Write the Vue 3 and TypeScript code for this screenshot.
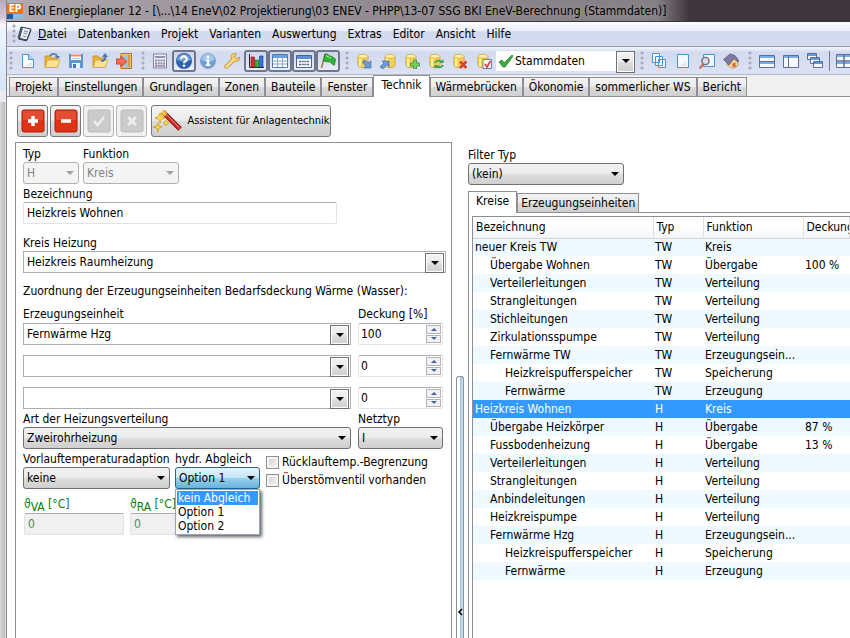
<script setup lang="ts">
import { ref } from 'vue'

interface Tool { icon: string; label: string; pressed?: boolean }
interface Circuit { name: string; level: number; typ: string; fn: string; share?: string }

const dbBase = '<path d="M2 3.5v9c0 1.4 2.2 2 5 2s5-.6 5-2v-9z" fill="#f3cf58" stroke="#c99a2c" stroke-width=".8"/><path d="M4 5v8.500" stroke="#fff3b0" stroke-width="2"/><ellipse cx="7" cy="3.300" rx="5" ry="2" fill="#fff0a2" stroke="#d3a93a" stroke-width=".8"/>'
const folder = '<path d="M1 3h5l1 2h6v9H1z" fill="#e9b53c" stroke="#c08a20" stroke-width=".8"/><path d="M3.500 7H16l-2.500 7.500H1z" fill="#ffe391" stroke="#d3a236" stroke-width=".8"/>'

const icons: Record<string, string> = {
  page: '<path d="M2.500 1.500h6l5 5v8h-11z" fill="#fff" stroke="#4a8fd0"/><path d="M8.500 1.500v5h5" fill="#bcd9f3" stroke="#4a8fd0"/><path d="M4 13h8V9z" fill="#d9ebfb"/>',
  open: folder + '<path d="M6 3c2-3 6-2.500 7 0" fill="none" stroke="#5a7ba8" stroke-width="1.800"/><path d="M10.500 3H16l-2 3z" fill="#5a7ba8"/>',
  save: '<path d="M1 1h14v14H1z" fill="#5f95cf"/><path d="M3 1h10v6H3z" fill="#fff"/><path d="M3 2.500h10" stroke="#ef8661" stroke-width="2"/><path d="M4 5.500h8" stroke="#b9c9da"/><path d="M4 10h8v5H4z" fill="#eaf2fa"/><path d="M5 11h3v4H5z" fill="#4578b4"/>',
  openUp: folder + '<path d="M9 8c4 0 4.500-2 4.500-5" fill="none" stroke="#4a77b2" stroke-width="2"/><path d="M10 4l3-4 3 4z" fill="#4a77b2"/>',
  exit: '<path d="M5 .5h10.500v15H5z" fill="#f2c46a" stroke="#a9762b"/><path d="M7 2h7v13H7z" fill="#9cc6e8"/><path d="M12 2h2v13l-2-2z" fill="#d99743"/><path d="M0 6h5V3l6 5.500-6 5V11H0z" fill="#f57059" stroke="#be3527" stroke-width=".8"/>',
  calc: '<path d="M1.500 1h13v14h-13z" fill="#f0eff5" stroke="#8583a0"/><path d="M3 3h10v2H3z" fill="#9592ad"/><path d="M3 7.500h10M3 10.500h10M3 13h10" stroke="#8d8aa6" stroke-width="2" stroke-dasharray="2 .7"/>',
  help: '<circle cx="8" cy="8" r="8" fill="#2b62ab"/><path d="M1 7a7 6 0 0 1 14 0q-7 3-14 0" fill="#6f9dd6"/><path d="M5 6.300c0-4 6-3.600 5.800 0-.2 2-2.800 1.800-2.800 4" fill="none" stroke="#fff" stroke-width="2.200"/><circle cx="8" cy="12.800" r="1.300" fill="#fff"/>',
  info: '<circle cx="8" cy="8" r="7.600" fill="#6f9ed6" stroke="#8ba5c8" stroke-width=".8"/><path d="M1.500 7a6.500 6 0 0 1 13 0q-6.500 3-13 0" fill="#a6c5ea"/><circle cx="8" cy="4" r="1.500" fill="#fff"/><path d="M6 6.500h3.200v5H10.500v1.500h-5v-1.500h1.300V8H6z" fill="#fff"/>',
  wrench: '<path d="M2.500 13.500L10 6.500" stroke="#c08c34" stroke-width="4.400" stroke-linecap="round"/><path d="M15.500 4l-3 2-2-2 2-3.500c-3-1-6 1-5.500 4.500 0 3.500 7 5 8.500 1z" fill="#f7cf62" stroke="#c08c34" stroke-width=".8"/><path d="M2.500 13.500L10 6.500" stroke="#fadc82" stroke-width="2.800" stroke-linecap="round"/>',
  chart: '<path d="M1.500 1v13.500H16" fill="none" stroke="#26292f"/><path d="M3 4h3.500v10H3z" fill="#e3282d" stroke="#9b1a1e" stroke-width=".7"/><path d="M7 7h3.500v7H7z" fill="#3cad42" stroke="#1d7a25" stroke-width=".7"/><path d="M11.500 3h3.500v11h-3.500z" fill="#3474d2" stroke="#1b4a9c" stroke-width=".7"/>',
  table: '<path d="M.5 1.500h15v13H.5z" fill="#fff" stroke="#507bb8"/><path d="M1 2h14v3H1z" fill="#6b9fe0"/><path d="M1 8h14M1 11h14M5.500 5v9M10.500 5v9" stroke="#86a4cc"/>',
  list: '<path d="M.5 2.500h15v12H.5z" fill="#fff" stroke="#42629e"/><path d="M1 3h14v3H1z" fill="#5b8fd8"/><path d="M3 8.500h10M3 11.500h10" stroke="#4a6189" stroke-width="1.500" stroke-dasharray="2 .7"/>',
  flag: '<path d="M5 1L1.500 15" stroke="#9c7830" stroke-width="1.400"/><path d="M5 1c3-1 4 3 6 2l4.500 3-1 6c-3 0-4-4-6-3L3.500 8z" fill="#36b03c" stroke="#167c22" stroke-width=".8"/><path d="M6 3c2 0 3 2 5 2" stroke="#8be186" fill="none" stroke-width="1.500"/>',
  dbOut: dbBase + '<path d="M7 8l2-1 3 3 3-2v7H8l2-2-3-3z" fill="#6b9bd6" stroke="#3d6ca8" stroke-width=".7"/>',
  dbIn: '<g transform="translate(3)">' + dbBase + '</g><path d="M0 14l4-4-2-2h7v6l-2-2-4 4z" fill="#6b9bd6" stroke="#3d6ca8" stroke-width=".7"/>',
  dbAdd: dbBase + '<path d="M9.500 7h3v3h3v3h-3v3h-3v-3h-3v-3h3z" fill="#7ccd61" stroke="#3b9133" stroke-width=".8"/>',
  dbSync: dbBase + '<path d="M7 10c1-3 5-3 7-1M15 12c-1 3-5 3-7 1" fill="none" stroke="#3f9c46" stroke-width="1.800"/><path d="M15.500 6v4h-4zM6.500 16v-4h4z" fill="#3f9c46"/>',
  dbDel: dbBase + '<path d="M8 8.500l6.500 6.500M14.500 8.500L8 15" stroke="#d8412c" stroke-width="2.600"/>',
  dbCheck: dbBase + '<path d="M7 6.500h8.500v9H7z" fill="#f6f9ff" stroke="#6483b4"/><path d="M9 11l2 3 3.500-6" fill="none" stroke="#e04832" stroke-width="1.800"/>',
  copies: '<g fill="#f5faff" stroke="#4b94cf"><path d="M1.500.5h7v9h-7zM4.500 3.500h7v9h-7zM7.500 6.500h7v8h-7z"/></g>',
  sheet: '<path d="M2.500 1.500h11v13h-11z" fill="#f3f9ff" stroke="#4b94cf"/><path d="M4 13h8V8z" fill="#dcecfb"/>',
  find: '<path d="M4.500 1.500h11v12h-11z" fill="#eef6ff" stroke="#4b94cf"/><path d="M4.500 11L.5 15.500" stroke="#d4604c" stroke-width="2"/><circle cx="6.500" cy="8" r="3.600" fill="#d5dae6" stroke="#71697d" stroke-width="1.400"/>',
  home: '<path d="M4 8v4l6 3.500 5-3V7L11 3z" fill="#f8d889" stroke="#b08c48" stroke-width=".7"/><path d="M.5 6.500L7 1l5 1.500L16 8l-1.500 1L11 5.500 6 12z" fill="#7f78a0" stroke="#5c5478" stroke-width=".7"/><path d="M9.500 10.500l3-1v5l-3-1z" fill="#d8603a"/>',
  tileH: '<path d="M.5 2.500h15v12H.5z" fill="#f8fbff" stroke="#5d6d99"/><path d="M1 3h14v2H1zM1 9h14v2H1z" fill="#79ade2"/><path d="M.5 8.500h15" stroke="#5d6d99"/>',
  tileV: '<path d="M.5 2.500h15v12H.5z" fill="#f8fbff" stroke="#5d6d99"/><path d="M1 3h14v2H1z" fill="#79ade2"/><path d="M5.500 3v11" stroke="#5d6d99"/>',
  cascade: '<g fill="#f8fbff" stroke="#5d6d99"><path d="M.5.5h9v6h-9zM3.500 4.500h9v6h-9zM6.500 8.500h9v6h-9z"/></g><path d="M1 1h8v2H1zM4 5h8v2H4zM7 9h8v2H7z" fill="#5f9bdc"/>',
  grid: '<path d="M.5 1.500h15v13H.5z" fill="#f8fbff" stroke="#5d6d99"/><path d="M1 2h14v2H1zM1 9h14v2H1z" fill="#79ade2"/><path d="M.5 8h15M8 2v12" stroke="#5d6d99" stroke-width="1.500"/>',
}

const groupA: Tool[] = [
  { icon: 'page', label: 'Neu' }, { icon: 'open', label: 'Öffnen' }, { icon: 'save', label: 'Speichern' },
  { icon: 'openUp', label: 'Importieren' }, { icon: 'exit', label: 'Beenden' },
]
const groupB: Tool[] = [
  { icon: 'calc', label: 'Rechner' }, { icon: 'help', label: 'Hilfe', pressed: true }, { icon: 'info', label: 'Info' },
  { icon: 'wrench', label: 'Einstellungen' }, { icon: 'chart', label: 'Diagramm', pressed: true },
  { icon: 'table', label: 'Tabelle', pressed: true }, { icon: 'list', label: 'Liste', pressed: true },
  { icon: 'flag', label: 'Markierung', pressed: true },
]
const groupC: Tool[] = [
  { icon: 'dbOut', label: 'Variante laden' }, { icon: 'dbIn', label: 'Variante sichern' }, { icon: 'dbAdd', label: 'Variante hinzufügen' },
  { icon: 'dbSync', label: 'Variante aktualisieren' }, { icon: 'dbDel', label: 'Variante löschen' }, { icon: 'dbCheck', label: 'Variante prüfen' },
]
const groupD: Tool[] = [
  { icon: 'copies', label: 'Alle Seiten' }, { icon: 'sheet', label: 'Seite' }, { icon: 'find', label: 'Vorschau' }, { icon: 'home', label: 'Gebäude' },
]
const groupE: Tool[] = [
  { icon: 'tileH', label: 'Untereinander' }, { icon: 'tileV', label: 'Nebeneinander' }, { icon: 'cascade', label: 'Überlappend' },
]

const menu = ['Datenbanken', 'Projekt', 'Varianten', 'Auswertung', 'Extras', 'Editor', 'Ansicht', 'Hilfe']
const tabs = ['Projekt', 'Einstellungen', 'Grundlagen', 'Zonen', 'Bauteile', 'Fenster', 'Technik', 'Wärmebrücken', 'Ökonomie', 'sommerlicher WS', 'Bericht']
const activeTab = ref('Technik')

const name = ref('Heizkreis Wohnen')
const sources = ref([
  { unit: 'Fernwärme Hzg', share: 100 },
  { unit: '', share: 0 },
  { unit: '', share: 0 },
])
const balance = ref('Option 1')
const balanceOpen = ref(true)
const balanceOptions = ['kein Abgleich', 'Option 1', 'Option 2']
const hovered = ref('kein Abgleich')
function pick(option: string) {
  balance.value = option
  balanceOpen.value = false
}
function step(i: number, by: number) {
  const s = sources.value[i]
  s.share = Math.min(100, Math.max(0, s.share + by))
}

const circuits: Circuit[] = [
  { name: 'neuer Kreis TW', level: 0, typ: 'TW', fn: 'Kreis' },
  { name: 'Übergabe Wohnen', level: 1, typ: 'TW', fn: 'Übergabe', share: '100 %' },
  { name: 'Verteilerleitungen', level: 1, typ: 'TW', fn: 'Verteilung' },
  { name: 'Strangleitungen', level: 1, typ: 'TW', fn: 'Verteilung' },
  { name: 'Stichleitungen', level: 1, typ: 'TW', fn: 'Verteilung' },
  { name: 'Zirkulationsspumpe', level: 1, typ: 'TW', fn: 'Verteilung' },
  { name: 'Fernwärme TW', level: 1, typ: 'TW', fn: 'Erzeugungsein...' },
  { name: 'Heizkreispufferspeicher', level: 2, typ: 'TW', fn: 'Speicherung' },
  { name: 'Fernwärme', level: 2, typ: 'TW', fn: 'Erzeugung' },
  { name: 'Heizkreis Wohnen', level: 0, typ: 'H', fn: 'Kreis' },
  { name: 'Übergabe Heizkörper', level: 1, typ: 'H', fn: 'Übergabe', share: '87 %' },
  { name: 'Fussbodenheizung', level: 1, typ: 'H', fn: 'Übergabe', share: '13 %' },
  { name: 'Verteilerleitungen', level: 1, typ: 'H', fn: 'Verteilung' },
  { name: 'Strangleitungen', level: 1, typ: 'H', fn: 'Verteilung' },
  { name: 'Anbindeleitungen', level: 1, typ: 'H', fn: 'Verteilung' },
  { name: 'Heizkreispumpe', level: 1, typ: 'H', fn: 'Verteilung' },
  { name: 'Fernwärme Hzg', level: 1, typ: 'H', fn: 'Erzeugungsein...' },
  { name: 'Heizkreispufferspeicher', level: 2, typ: 'H', fn: 'Speicherung' },
  { name: 'Fernwärme', level: 2, typ: 'H', fn: 'Erzeugung' },
]
const selected = ref(9)
</script>

<template>
  <div class="desktop">
    <aside class="behind"><div class="behind-title"></div><div class="behind-body"></div><div class="behind-scroll"></div></aside>
    <div class="window">
      <header class="titlebar">
        <span class="logo"><b>EP</b><i></i></span>
        <h1>BKI Energieplaner 12 - [\...\14 EneV\02 Projektierung\03 ENEV - PHPP\13-07 SSG BKI EneV-Berechnung (Stammdaten)]</h1>
      </header>

      <nav class="menubar">
        <span class="grip"></span>
        <svg class="book" viewBox="0 0 16 16" aria-hidden="true">
          <path d="M5 1l10 2-4 11-9-2z" fill="#e9edf4" stroke="#3d4656" />
          <path d="M5 1L2 12l2 .5L7 1.500z" fill="#4b5567" />
          <path d="M8 5l4 1M7.500 7l3.500 1M7 10l3 .6" stroke="#7e899b" />
          <path d="M2.500 13l8 1.800L15 4" fill="none" stroke="#2e3542" />
        </svg>
        <a href="#"><u>D</u>atei</a>
        <a v-for="m in menu" :key="m" href="#">{{ m }}</a>
      </nav>

      <div class="toolbar" role="toolbar" aria-label="Werkzeuge">
        <span class="grip first"></span>
        <button v-for="t in groupA" :key="t.icon" type="button" class="tool" :aria-label="t.label"><svg viewBox="0 0 16 16" v-html="icons[t.icon]"></svg></button>
        <span class="grip"></span>
        <button v-for="t in groupB" :key="t.icon" type="button" class="tool" :class="{ pressed: t.pressed }" :aria-label="t.label"><svg viewBox="0 0 16 16" v-html="icons[t.icon]"></svg></button>
        <span class="grip"></span>
        <button v-for="t in groupC" :key="t.icon" type="button" class="tool" :aria-label="t.label"><svg viewBox="0 0 16 16" v-html="icons[t.icon]"></svg></button>
        <div class="combo variant">
          <svg class="tick" viewBox="0 0 16 16" aria-hidden="true"><path d="M1 9l3-2 2 3 8-8 1 1-8 11H5z" fill="#3fae3f" stroke="#1c7c26" stroke-width=".8" /></svg>
          <select aria-label="Variante"><option>Stammdaten</option></select>
        </div>
        <span class="grip"></span>
        <button v-for="t in groupD" :key="t.icon" type="button" class="tool" :aria-label="t.label"><svg viewBox="0 0 16 16" v-html="icons[t.icon]"></svg></button>
        <span class="grip"></span>
        <button v-for="t in groupE" :key="t.icon" type="button" class="tool" :aria-label="t.label"><svg viewBox="0 0 16 16" v-html="icons[t.icon]"></svg></button>
        <span class="sep"></span>
        <button type="button" class="tool" aria-label="Raster"><svg viewBox="0 0 16 16" v-html="icons.grid"></svg></button>
      </div>

      <div class="tabs" role="tablist">
        <button v-for="t in tabs" :key="t" type="button" role="tab" class="tab" :class="{ active: t === activeTab }" :aria-selected="t === activeTab" @click="activeTab = t">{{ t }}</button>
      </div>

      <main class="panes">
        <section class="left">
          <div class="actions">
            <button type="button" class="action" aria-label="Hinzufügen"><svg viewBox="0 0 24 24"><rect class="red" x="1" y="1" width="22" height="22" rx="2" /><path d="M2 2h20v9H2z" fill="#fff" opacity=".13" /><path d="M12 7v10M7 12h10" stroke="#fff" stroke-width="3.500" /></svg></button>
            <button type="button" class="action" aria-label="Entfernen"><svg viewBox="0 0 24 24"><rect class="red" x="1" y="1" width="22" height="22" rx="2" /><path d="M2 2h20v9H2z" fill="#fff" opacity=".13" /><path d="M7 12h10" stroke="#fff" stroke-width="3.500" /></svg></button>
            <button type="button" class="action off" disabled aria-label="Übernehmen"><svg viewBox="0 0 24 24"><rect class="grey" x="1" y="1" width="22" height="22" rx="2" /><path d="M7 12l3.500 4L17 8" fill="none" stroke="#eee" stroke-width="2.500" /></svg></button>
            <button type="button" class="action off" disabled aria-label="Verwerfen"><svg viewBox="0 0 24 24"><rect class="grey" x="1" y="1" width="22" height="22" rx="2" /><path d="M8 8l8 8M16 8l-8 8" stroke="#eee" stroke-width="3" /></svg></button>
            <button type="button" class="action wizard">
              <svg viewBox="0 0 30 22" aria-hidden="true">
                <path d="M11 2l17 17" stroke="#7c1512" stroke-width="5" /><path d="M11 2l17 17" stroke="#dc3427" stroke-width="3" />
                <path d="M10 1l4 4" stroke="#f5c53a" stroke-width="4" /><path d="M13 3l14 14" stroke="#f58b77" stroke-width="1" />
                <g fill="#ffe14a" stroke="#cf9c14" stroke-width=".8"><path d="M8 3l1.300 3.500L13 8 9.300 9.500 8 13l-1.300-3.500L3 8l3.700-1.500z" /><path d="M6 13l1 3 3 1-3 1-1 4-1-4-4-1 4-1z" /><path d="M14 10l1 2 2 1-2 1-1 2-1-2-2-1 2-1z" /></g>
              </svg>
              <span>Assistent für Anlagentechnik</span>
            </button>
          </div>

          <form class="panel" @submit.prevent>
            <div class="row top">
              <div class="field typ"><label for="typ">Typ</label><div class="drop off"><select id="typ" disabled><option>H</option></select></div></div>
              <div class="field fn"><label for="fn">Funktion</label><div class="drop off"><select id="fn" disabled><option>Kreis</option></select></div></div>
            </div>
            <div class="field name"><label for="name">Bezeichnung</label><input id="name" v-model="name" class="text" type="text" /></div>
            <div class="field circuit"><label for="circuit">Kreis Heizung</label><div class="combo"><select id="circuit"><option>Heizkreis Raumheizung</option></select></div></div>
            <p>Zuordnung der Erzeugungseinheiten Bedarfsdeckung Wärme (Wasser):</p>

            <div class="pair heads"><label for="unit0">Erzeugungseinheit</label><label for="share0">Deckung [%]</label></div>
            <div v-for="(s, i) in sources" :key="i" class="pair source">
              <div class="combo"><select :id="'unit' + i" v-model="s.unit" :aria-label="'Erzeugungseinheit ' + (i + 1)"><option value=""></option><option>Fernwärme Hzg</option></select></div>
              <div class="spin">
                <input :id="'share' + i" v-model.number="s.share" type="number" min="0" max="100" :aria-label="'Deckung ' + (i + 1)" />
                <div class="steps"><button type="button" aria-label="Mehr" @click="step(i, 1)"><i class="up"></i></button><button type="button" aria-label="Weniger" @click="step(i, -1)"><i class="down"></i></button></div>
              </div>
            </div>

            <div class="pair">
              <div class="field"><label for="dist">Art der Heizungsverteilung</label><div class="drop"><select id="dist"><option>Zweirohrheizung</option></select></div></div>
              <div class="field"><label for="net">Netztyp</label><div class="drop"><select id="net"><option>I</option></select></div></div>
            </div>

            <div class="row last">
              <div class="field flow"><label for="flow">Vorlauftemperaturadaption</label><div class="drop"><select id="flow"><option>keine</option></select></div></div>
              <div class="field balance">
                <label for="balance">hydr. Abgleich</label>
                <div class="drop hot"><select id="balance" v-model="balance"><option v-for="o in balanceOptions" :key="o">{{ o }}</option></select></div>
                <ul v-if="balanceOpen" class="popup" role="listbox" aria-label="hydr. Abgleich">
                  <li v-for="o in balanceOptions" :key="o" role="option" :aria-selected="o === balance" :class="{ hover: o === hovered }" @mouseenter="hovered = o" @click="pick(o)">{{ o }}</li>
                </ul>
              </div>
              <div class="checks">
                <label><input type="checkbox" />Rücklauftemp.-Begrenzung</label>
                <label><input type="checkbox" />Überstömventil vorhanden</label>
              </div>
            </div>

            <div class="row temps">
              <div class="temp"><label for="va">ϑ<sub>VA</sub> [°C]</label><input id="va" class="text" type="text" value="0" readonly /></div>
              <div class="temp"><label for="ra">ϑ<sub>RA</sub> [°C]</label><input id="ra" class="text" type="text" value="0" readonly /></div>
            </div>
          </form>
        </section>

        <div class="gutter"><button type="button" class="splitter" aria-label="Bereich einklappen"><svg viewBox="0 0 6 8"><path d="M5 1L2 4l3 3" fill="none" stroke="#000" stroke-width="1.500" /></svg></button></div>

        <section class="right">
          <div class="field filter"><label for="filter">Filter Typ</label><div class="drop"><select id="filter"><option>(kein)</option></select></div></div>
          <div class="subtabs" role="tablist">
            <button type="button" role="tab" class="tab active" aria-selected="true">Kreise</button>
            <button type="button" role="tab" class="tab" aria-selected="false">Erzeugungseinheiten</button>
          </div>
          <div class="sheet">
            <div class="list">
              <table>
                <colgroup><col class="c-name" /><col class="c-typ" /><col class="c-fn" /><col class="c-share" /></colgroup>
                <thead><tr><th>Bezeichnung</th><th>Typ</th><th>Funktion</th><th>Deckung</th></tr></thead>
                <tbody>
                  <tr v-for="(c, i) in circuits" :key="i" :class="{ selected: i === selected }" @click="selected = i">
                    <td :class="'level' + c.level">{{ c.name }}</td><td>{{ c.typ }}</td><td>{{ c.fn }}</td><td>{{ c.share }}</td>
                  </tr>
                </tbody>
              </table>
            </div>
          </div>
        </section>
      </main>
    </div>
  </div>
</template>

<style>
body { overflow: hidden; }
</style>

<style scoped>
* { box-sizing: border-box; }
.desktop { display: flex; height: 100vh; overflow: hidden; background: #fff; color: #000; font: 12px/16px "DejaVu Sans Condensed", "DejaVu Sans", sans-serif; }
button, input, select { font: inherit; color: inherit; margin: 0; }
label, p, h1 { margin: 0; font-weight: 400; white-space: nowrap; }
svg { display: block; flex: none; }

.behind { flex: none; width: 7px; display: flex; flex-direction: column; border-right: 1px solid #8c858c; }
.behind-title { height: 26px; background: linear-gradient(#b9a9b9, #d9c9d8 70%, #fff); }
.behind-body { height: 64px; background: linear-gradient(#eef5fd, #d3e5f8); }
.behind-scroll { flex: 1; background: linear-gradient(90deg, #d8d8d9, #bfbfc2 75%, #e8e8e8); border-top: 12px solid #ececee; }
.window { flex: 1; min-width: 0; display: flex; flex-direction: column; }

.titlebar { flex: none; height: 22px; display: flex; align-items: center; gap: 5px; overflow: hidden; border-bottom: 1px solid #3b3338; background: linear-gradient(90deg, #b3acb3, #9a9399 25%, #8a848a 60%, #858085 77%, #3d353b 81%, #3d353b); }
.logo { flex: none; width: 16px; height: 16px; display: flex; flex-direction: column; background: #e8731c; color: #fff; }
.logo b { font-size: 10px; line-height: 11px; text-align: center; }
.logo i { flex: 1; background: linear-gradient(90deg, #1c5c9e 40%, #8fbbe3 40%); }
h1 { font-size: 12px; line-height: 20px; padding-right: 6px; text-shadow: 0 0 6px #a9a2a8; }

.menubar { flex: none; height: 25px; display: flex; align-items: center; gap: 11px; padding-left: 3px; border-bottom: 1px solid #9a9ca8; background: linear-gradient(#fbfcff, #e9eefa 38%, #d3daee 40%, #d5dcf0); }
.menubar a { color: #000; text-decoration: none; }
.menubar .book { width: 16px; height: 16px; margin: 0 -5px 0 -14px; }
.grip { flex: none; width: 12px; height: 20px; background: radial-gradient(circle at 2px 2px, #a7abba 1px, transparent 2px) 5px 0 / 4px 5px repeat-y; }
.menubar .grip, .grip.first { width: 9px; background-position: 2px 0; }

.toolbar { flex: none; height: 28px; display: flex; align-items: center; overflow: hidden; border-bottom: 1px solid #b6b8c4; background: linear-gradient(#f3f6fd, #d2daef 20%, #dce2f3); }
.tool { flex: none; width: 24px; height: 22px; padding: 0; display: grid; place-items: center; border: 1px solid transparent; border-radius: 3px; background: none; }
.tool svg { width: 16px; height: 16px; }
.tool.pressed { border: 2px solid #73768a; background: linear-gradient(#cdd5e8, #e8edf8); }
.sep { flex: none; width: 1px; height: 20px; margin: 0 2px; background: #777b90; }
.tick { width: 16px; height: 16px; }

.tabs { flex: none; height: 22px; display: flex; align-items: flex-end; padding-left: 2px; background: linear-gradient(#f0f0f0 21px, #8d8e96 21px); }
.tab { height: 20px; padding: 0 5px; border: 1px solid #8d8e96; background: linear-gradient(#f3f3f3, #ebebeb 48%, #dadada 52%, #d0d0d0); white-space: nowrap; line-height: 16px; }
.tab.active { height: 22px; padding: 0 7px 3px; border-bottom: 0; background: #fff; }
.subtabs .tab { padding: 0 3px; }
.subtabs .tab.active { padding: 0 7px 3px; }

.panes { flex: 1; min-height: 0; display: grid; grid-template-columns: 445fr 16px 382fr; }
.left { min-width: 0; display: flex; flex-direction: column; padding: 8px 0 0 8px; }
.actions { display: flex; gap: 2px; padding-left: 2px; height: 37px; }
.action { width: 31px; height: 32px; padding: 2px; display: flex; align-items: center; justify-content: center; border: 1px solid #777; border-radius: 3px; background: linear-gradient(#f4f4f4, #ebebeb 48%, #dadada 52%, #cfcfcf); }
.action svg { width: 24px; height: 24px; }
.action.off { border-color: #b4b4b8; background: #f2f2f2; }
.red { fill: #e23214; stroke: #a91d0a; }
.grey { fill: #cbcbcb; stroke: #b8b8b8; }
.action.wizard { width: 180px; gap: 5px; margin-left: 2px; white-space: nowrap; font-size: 11px; }
.action.wizard svg { width: 30px; height: 24px; }

.panel { flex: 1; min-height: 0; display: flex; flex-direction: column; padding: 3px 5px 0 7px; border: 1px solid #8d8e96; border-bottom: 0; }
.field { position: relative; display: flex; flex-direction: column; min-width: 0; }
.row { display: flex; }
.top { gap: 4px; }
.typ { width: 56px; }
.fn { width: 96px; }
.name { width: 314px; margin-top: 2px; }
.circuit { margin-top: 11px; }
.panel p { margin: 10px 0 7px; }
.pair { display: grid; grid-template-columns: minmax(0, 1fr) 85px; column-gap: 7px; padding-right: 3px; }
.heads { margin-bottom: 1px; }
.source { margin-bottom: 10px; }
.source + .pair:not(.source) { margin-top: -8px; }

.text { height: 22px; padding: 0 3px; border: 1px solid #e2e3ea; border-top-color: #abadb3; border-radius: 2px; background: #fff; outline: 0; }
.drop, .combo { position: relative; display: flex; height: 22px; }
.drop select, .combo select { appearance: none; flex: 1; min-width: 0; width: 100%; height: 100%; padding: 0 20px 0 3px; border: 1px solid #707070; border-radius: 3px; outline: 0; background: linear-gradient(#f2f2f2, #ebebeb 48%, #dddddd 52%, #cfcfcf); opacity: 1; }
.drop::after, .combo::after { content: ""; position: absolute; right: 5px; top: 9px; border: 4px solid transparent; border-top-color: #000; border-bottom: 0; pointer-events: none; }
.drop.off select { border-color: #adb2b5; background: #f4f4f4; color: #838383; }
.drop.off::after { border-top-color: #a0a0a0; }
.drop.hot select { border-color: #2c628b; background: linear-gradient(#e5f4fc, #c4e5f6 48%, #98d1ef 52%, #68b3db); }
.combo select { border-color: #abadb3; border-radius: 0; background: #fff; }
.combo::before { content: ""; position: absolute; right: 2px; top: 2px; width: 17px; height: 18px; border: 1px solid #707070; background: linear-gradient(#f2f2f2, #ebebeb 48%, #dddddd 52%, #cfcfcf); box-shadow: inset 0 0 0 1px #fff; pointer-events: none; }
.combo::after { right: 7px; top: 10px; }
.variant { flex: none; width: 139px; height: 20px; align-items: center; background: #fff; padding-left: 2px; }
.variant select { border: 0; padding-left: 1px; }
.variant::before { right: 0; top: 0; height: 20px; }
.variant::after { right: 5px; top: 8px; }

.spin { display: flex; height: 22px; padding: 1px; border: 1px solid #e2e3ea; border-top-color: #abadb3; border-radius: 2px; }
.spin input { appearance: textfield; flex: 1; min-width: 0; border: 0; padding: 0 1px; outline: 0; background: none; }
.steps { width: 15px; display: grid; grid-template-rows: 1fr 1fr; gap: 1px; }
.steps button { display: grid; place-items: center; padding: 0; border: 1px solid #b4b4bc; background: #f2f2f4; }
.steps i { border: 3px solid transparent; }
.steps .up { border-top: 0; border-bottom-color: #4a62a8; }
.steps .down { border-bottom: 0; border-top-color: #4a62a8; }

.last { margin-top: 2px; gap: 5px; }
.flow { width: 147px; }
.balance { width: 85px; }
.checks { display: flex; flex-direction: column; gap: 2px; padding: 3px 0 0 1px; }
.checks label { display: flex; align-items: center; gap: 3px; height: 16px; }
.checks input { appearance: none; width: 13px; height: 13px; border: 1px solid #8e8f8f; background: linear-gradient(135deg, #cbcfd5, #f6f6f6); box-shadow: inset 0 0 0 2px #f4f4f4; }
.popup { position: absolute; z-index: 2; top: 38px; left: 0; right: 0; margin: 0; padding: 1px; list-style: none; border: 1px solid #9aa5b5; background: #fff; box-shadow: 2px 2px 3px #0009; }
.popup li { height: 14px; padding-left: 1px; line-height: 14px; white-space: nowrap; }
.popup li.hover { background: #3399ff; color: #fff; }
.temps { gap: 6px; padding: 7px 0 0 1px; color: #0a7f0a; }
.temp { width: 100px; display: flex; flex-direction: column; }
.temp label { height: 17px; }
.temp sub { font-size: 12px; line-height: 0; vertical-align: -3px; }
.temp .text { background: #f0f0f0; color: #4f8a52; }

.gutter { display: flex; padding: 279px 4px 0; }
.splitter { position: relative; width: 8px; padding: 0; border: 1px solid #8d8e96; border-bottom: 0; border-radius: 3px 3px 0 0; background: linear-gradient(90deg, #fff 50%, #8fc0d8 60%, #dcebf2); display: flex; align-items: flex-end; justify-content: center; }
.splitter svg { width: 6px; height: 8px; margin-bottom: 22px; }

.right { min-width: 0; overflow: hidden; display: flex; flex-direction: column; padding-top: 50px; }
.filter { width: 156px; }
.subtabs { display: flex; align-items: flex-end; height: 22px; margin-top: 6px; flex: none; background: linear-gradient(#fff 21px, #8d8e96 21px); }
.sheet { flex: 1; display: flex; border-left: 1px solid #8d8e96; padding: 3px 0 0 3px; }
.list { flex: 1; min-width: 0; border: 1px solid #8d8e96; border-width: 1px 0 0 1px; }
table { width: 100%; table-layout: fixed; border-collapse: collapse; }
.c-name { width: 180px; }
.c-typ { width: 50px; }
.c-fn { width: 100px; }
th { height: 21px; padding: 0 2px 0 3px; text-align: left; font-weight: 400; border-right: 1px solid #dfe0e4; border-bottom: 1px solid #d5d5d5; background: linear-gradient(#fff 40%, #f3f4f6); white-space: nowrap; overflow: hidden; }
td { height: 18px; padding: 0 2px; white-space: nowrap; overflow: hidden; line-height: 16px; }
tbody tr:nth-child(odd) { background: #eefaff; }
tbody tr.selected { background: #3399ff; color: #fff; }
.level1 { padding-left: 17px; }
.level2 { padding-left: 32px; }
</style>
